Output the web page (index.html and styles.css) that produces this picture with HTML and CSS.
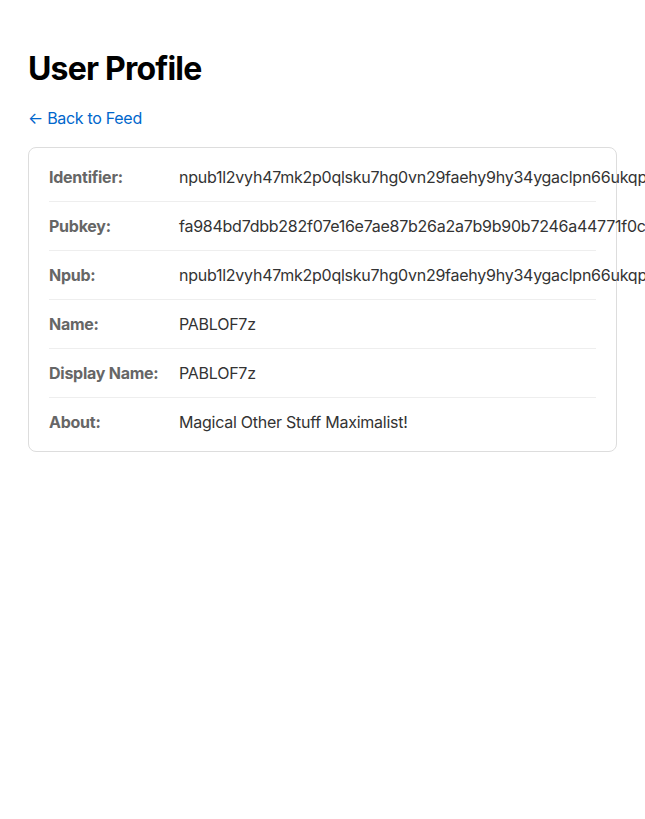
FILE: index.html
```html
<!DOCTYPE html>
<html lang="en">
<head>
<meta charset="utf-8">
<title>User Profile</title>
<link rel="stylesheet" href="styles.css">
</head>
<body>
<main class="page">
  <h1 class="title">User Profile</h1>
  <a class="back-link" href="#">← Back to Feed</a>
  <section class="card">
    <div class="row"><span class="label">Identifier:</span><span class="value">npub1l2vyh47mk2p0qlsku7hg0vn29faehy9hy34ygaclpn66ukqp3afqutajft</span></div>
    <div class="row"><span class="label">Pubkey:</span><span class="value">fa984bd7dbb282f07e16e7ae87b26a2a7b9b90b7246a44771f0cf5ae58018f52</span></div>
    <div class="row"><span class="label">Npub:</span><span class="value">npub1l2vyh47mk2p0qlsku7hg0vn29faehy9hy34ygaclpn66ukqp3afqutajft</span></div>
    <div class="row"><span class="label">Name:</span><span class="value">PABLOF7z</span></div>
    <div class="row"><span class="label">Display Name:</span><span class="value">PABLOF7z</span></div>
    <div class="row"><span class="label">About:</span><span class="value">Magical Other Stuff Maximalist!</span></div>
  </section>
</main>
</body>
</html>
```

FILE: styles.css
```css
html {
  overflow-x: hidden;
}
body {
  margin: 0;
  font-family: Inter, "Liberation Sans", sans-serif;
  color: #000;
  background: #fff;
}
.page {
  padding: 28px;
}
.title {
  font-size: 32px;
  font-weight: 700;
  letter-spacing: -0.8px;
  margin: 22px 0 20px;
  line-height: 1.2;
}
.back-link {
  display: inline-block;
  color: #0066cc;
  text-decoration: none;
  font-size: 16px;
  letter-spacing: -0.3px;
  line-height: 20px;
  margin-bottom: 19px;
}
.card {
  border: 1px solid #dddddd;
  border-radius: 8px;
  padding: 5px 20px;
}
.row {
  display: flex;
  padding: 12px 0;
  line-height: 24px;
  font-size: 16px;
  letter-spacing: -0.25px;
  border-bottom: 1px solid #eeeeee;
  white-space: nowrap;
}
.row:last-child {
  border-bottom: none;
}
.label {
  flex: 0 0 130px;
  font-weight: 700;
  color: #666666;
}
.value {
  color: #333333;
}
```
